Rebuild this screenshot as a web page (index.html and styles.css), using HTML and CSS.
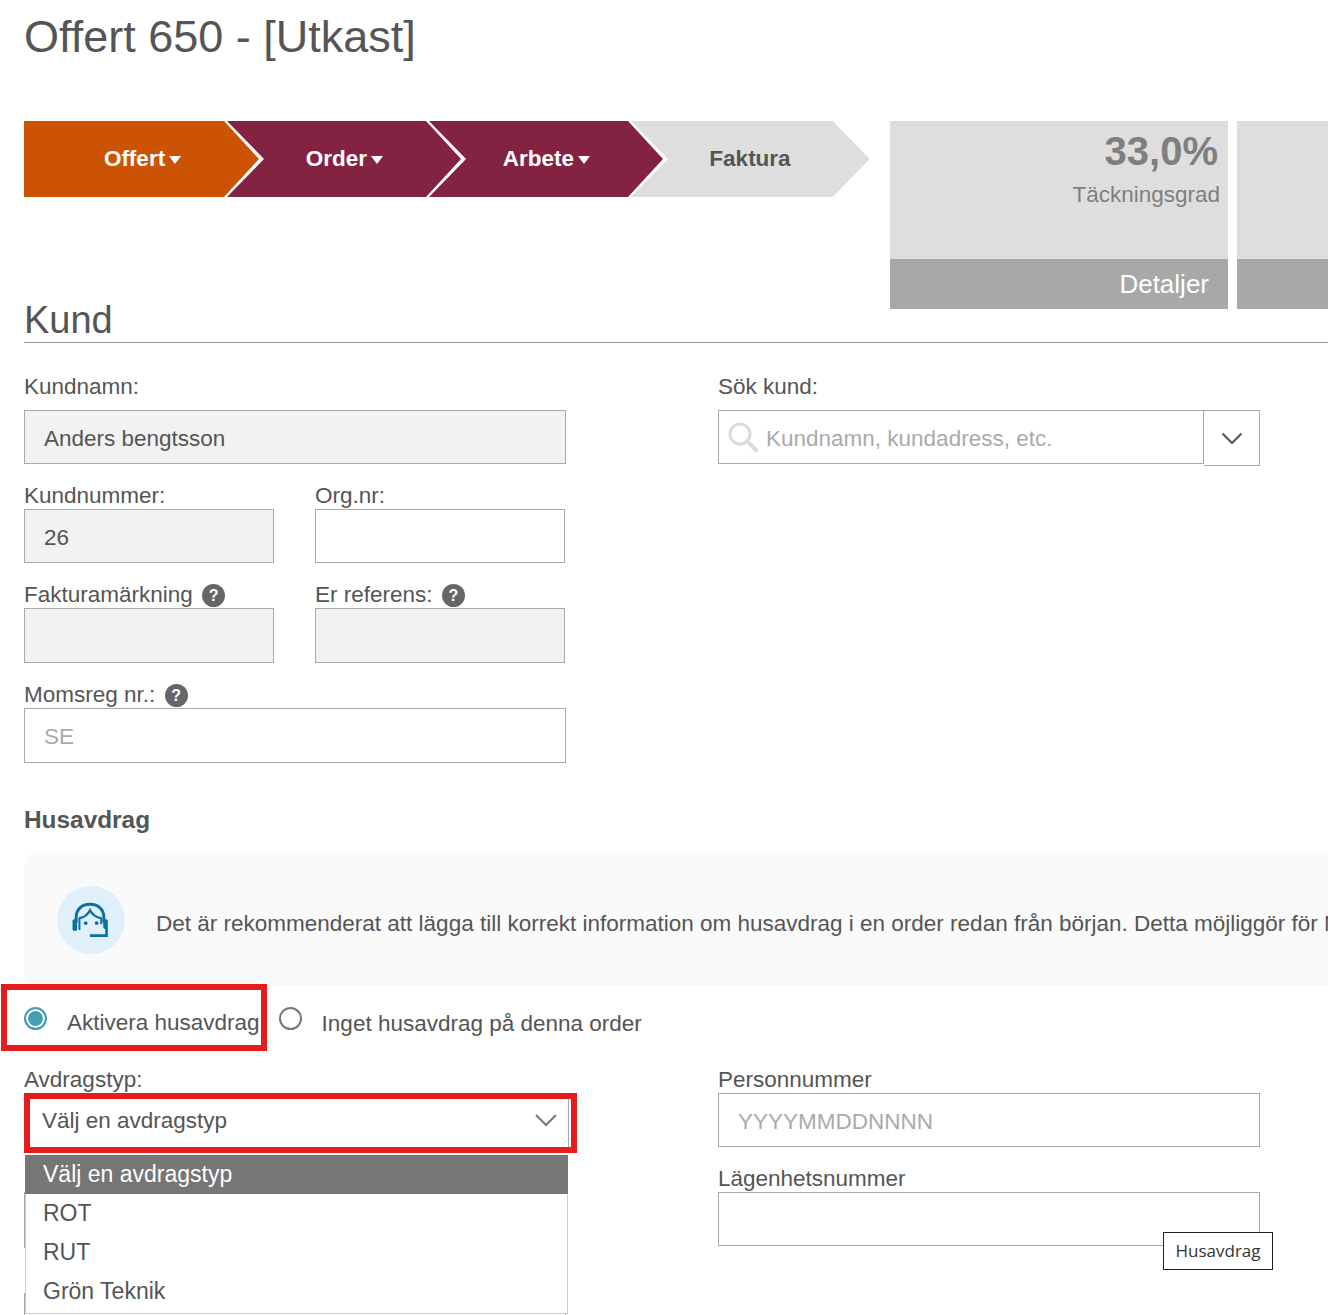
FILE: index.html
```html
<!DOCTYPE html>
<html lang="sv">
<head>
    <meta charset="UTF-8">
    <title>Offert 650</title>
    <link rel="stylesheet" href="styles.css">
</head>
<body>
    <div class="page">
        <h1 class="title">Offert 650 - [Utkast]</h1>

        <!-- Flow steps and key figures -->
        <div class="top-row">
            <div class="steps">
                <div class="step step-1"><div class="step-fill orange"><span>Offert</span><i class="caret"></i></div></div>
                <div class="step step-2"><div class="step-fill maroon"><span>Order</span><i class="caret"></i></div></div>
                <div class="step step-3"><div class="step-fill maroon"><span>Arbete</span><i class="caret"></i></div></div>
                <div class="step step-4"><div class="step-fill grey"><span>Faktura</span></div></div>
            </div>
            <div class="cards">
                <div class="card">
                    <div class="card-body">
                        <div class="card-value">33,0%</div>
                        <div class="card-label">Täckningsgrad</div>
                    </div>
                    <div class="card-foot">Detaljer</div>
                </div>
                <div class="card card-cut">
                    <div class="card-body"></div>
                    <div class="card-foot"></div>
                </div>
            </div>
        </div>

        <h2 class="section-title">Kund</h2>

        <div class="form-cols">
            <div class="col">
                <label class="label label-first">Kundnamn:</label>
                <div class="input readonly">Anders bengtsson</div>
                <div class="pair">
                    <div class="field">
                        <label class="label">Kundnummer:</label>
                        <div class="input readonly">26</div>
                    </div>
                    <div class="field">
                        <label class="label">Org.nr:</label>
                        <div class="input"></div>
                    </div>
                </div>
                <div class="pair pair-tall">
                    <div class="field">
                        <label class="label">Fakturamärkning <span class="help">?</span></label>
                        <div class="input readonly"></div>
                    </div>
                    <div class="field">
                        <label class="label">Er referens: <span class="help">?</span></label>
                        <div class="input readonly"></div>
                    </div>
                </div>
                <div class="single">
                    <label class="label">Momsreg nr.: <span class="help">?</span></label>
                    <div class="input placeholder">SE</div>
                </div>
            </div>
            <div class="col">
                <label class="label label-first">Sök kund:</label>
                <div class="search">
                    <div class="search-box">
                        <svg class="search-icon" width="30" height="30" viewBox="0 0 30 30" fill="none" stroke="#dcdcdc">
                            <circle cx="12" cy="12" r="10" stroke-width="3"/>
                            <path d="M19 19l9 9" stroke-width="4" stroke-linecap="round"/>
                        </svg>
                        <span>Kundnamn, kundadress, etc.</span>
                    </div>
                    <div class="search-toggle">
                        <svg width="22" height="13" viewBox="0 0 22 13" fill="none" stroke="#555" stroke-width="2"><path d="M1.500 1.500L11 11l9.500-9.500"/></svg>
                    </div>
                </div>
            </div>
        </div>

        <h3 class="sub-title">Husavdrag</h3>

        <div class="notice">
            <div class="notice-icon">
                <svg width="40" height="38" viewBox="63 60 120 115" fill="none" stroke="#0b6fa4">
                    <path d="M78 125V110C78 85 95 70 120 70S162 85 162 110V125" stroke-width="9"/>
                    <path d="M88 112Q110 108 120 88Q130 108 154 112" stroke-width="7"/>
                    <path d="M88 110V148" stroke-width="6"/>
                    <path d="M154 110V130" stroke-width="6"/>
                    <rect x="67" y="115" width="14" height="36" rx="6" fill="#0b6fa4" stroke="none"/>
                    <rect x="160" y="115" width="14" height="30" rx="6" fill="#0b6fa4" stroke="none"/>
                    <path d="M170 140V165H120" stroke-width="8"/>
                    <circle cx="107" cy="127" r="5.500" fill="#0b6fa4" stroke="none"/>
                    <circle cx="140" cy="127" r="5.500" fill="#0b6fa4" stroke="none"/>
                </svg>
            </div>
            <p class="notice-text">Det är rekommenderat att lägga till korrekt information om husavdrag i en order redan från början. Detta möjliggör för M</p>
        </div>

        <div class="radios">
            <label class="radio-item"><span class="radio checked"></span><span class="radio-text">Aktivera husavdrag</span></label>
            <label class="radio-item second"><span class="radio"></span><span class="radio-text">Inget husavdrag på denna order</span></label>
        </div>

        <div class="form-cols">
            <div class="col">
                <label class="label">Avdragstyp:</label>
                <div class="select">
                    <span>Välj en avdragstyp</span>
                    <svg width="24" height="14" viewBox="0 0 24 14" fill="none" stroke="#777" stroke-width="2"><path d="M2 2l10 10L22 2"/></svg>
                </div>
                <!-- fields hidden behind the open list -->
                <div class="input behind behind-1"></div>
                <div class="input behind"></div>

                <div class="dropdown">
                    <div class="option selected">Välj en avdragstyp</div>
                    <div class="option">ROT</div>
                    <div class="option">RUT</div>
                    <div class="option">Grön Teknik</div>
                </div>
            </div>
            <div class="col">
                <label class="label">Personnummer</label>
                <div class="input placeholder">YYYYMMDDNNNN</div>
                <label class="label label-apartment">Lägenhetsnummer</label>
                <div class="input"></div>
            </div>
        </div>
    </div>

    <!-- Annotations and tooltip on top of the page -->
    <div class="marker marker-radio"></div>
    <div class="marker marker-select"></div>
    <div class="tooltip">Husavdrag</div>
</body>
</html>
```

FILE: styles.css
```css
html, body {
    margin: 0;
    padding: 0;
    width: 1328px;
    height: 1315px;
    overflow: hidden;
    background-color: #fff;
}

body {
    position: relative;
    font-family: "Liberation Sans", Arial, sans-serif;
    color: #555;
}

.page {
    padding-left: 24px;
    height: 1315px;
    box-sizing: border-box;
    overflow: hidden;
}

.title {
    margin: 0;
    padding-top: 11px;
    height: 121px;
    box-sizing: border-box;
    font-size: 45px;
    line-height: 52px;
    font-weight: normal;
}

/* Steps */
.top-row {
    display: flex;
    height: 188px;
}

.steps {
    display: flex;
    flex: none;
    width: 866px;
    height: 76px;
}

.step {
    position: relative;
    flex: none;
    width: 240px;
    height: 76px;
    margin-right: -38px;
    background-color: #fff;
    clip-path: polygon(0 0, 203px 0, 240px 38px, 203px 76px, 0 76px);
}

.step-1 { z-index: 4; }
.step-2 { z-index: 3; }
.step-3 { z-index: 2; }
.step-4 { z-index: 1; }

.step-fill {
    display: flex;
    align-items: center;
    justify-content: center;
    gap: 4px;
    height: 76px;
    padding-right: 3px;
    box-sizing: border-box;
    font-size: 22.500px;
    font-weight: bold;
    color: #fff;
    clip-path: polygon(0 0, 200px 0, 235px 38px, 200px 76px, 0 76px);
}

.step-4 .step-fill {
    padding-right: 0;
    clip-path: polygon(0 0, 203px 0, 240px 38px, 203px 76px, 0 76px);
}

.orange { background-color: #cc5204; }
.maroon { background-color: #842241; }
.grey { background-color: #dedede; color: #555; }

.caret {
    width: 0;
    height: 0;
    border-left: 6px solid transparent;
    border-right: 6px solid transparent;
    border-top: 8px solid #fff;
    margin-top: 2px;
}

/* Cards */
.cards {
    display: flex;
    gap: 9px;
    flex: none;
}

.card {
    flex: none;
    width: 338px;
    height: 188px;
    display: flex;
    flex-direction: column;
    background-color: #dedede;
}

.card-cut {
    width: 91px;
}

.card-body {
    flex: 1;
    text-align: right;
    padding: 6px 8px 0 0;
}

.card-value {
    font-size: 40px;
    line-height: 48px;
    font-weight: bold;
    color: #7f7f7f;
    padding-right: 2px;
}

.card-label {
    margin-top: 4px;
    font-size: 22.500px;
    line-height: 32px;
    color: #7f7f7f;
}

.card-foot {
    height: 50px;
    line-height: 50px;
    padding-right: 19px;
    text-align: right;
    font-size: 26px;
    color: #fff;
    background-color: #a8a8a8;
}

/* Section heading */
.section-title {
    position: relative;
    margin: -11px 0 0;
    height: 44px;
    border-bottom: 1px solid #999;
    font-size: 38px;
    line-height: 44px;
    font-weight: normal;
}

/* Form */
.form-cols {
    display: flex;
    gap: 152px;
}

.col {
    position: relative;
    width: 542px;
    flex: none;
}

.label {
    display: block;
    height: 26px;
    margin-bottom: 1px;
    font-size: 22.500px;
    line-height: 28px;
}

.label-first {
    margin-top: 30px;
    margin-bottom: 11px;
}

.input {
    box-sizing: border-box;
    height: 54px;
    border: 1px solid #aaa;
    padding-left: 19px;
    font-size: 22.500px;
    line-height: 56px;
    background-color: #fff;
}

.readonly {
    background-color: #f2f2f2;
}

.placeholder {
    color: #aaa;
}

.pair {
    display: flex;
    gap: 41px;
    margin-top: 18px;
}

.field {
    width: 250px;
}

.pair-tall .input,
.single .input {
    height: 55px;
}

.single {
    margin-top: 18px;
}

.help {
    display: inline-block;
    width: 23px;
    height: 23px;
    margin-left: 3px;
    border-radius: 50%;
    background-color: #666;
    color: #fff;
    font-size: 16px;
    font-weight: bold;
    line-height: 23px;
    text-align: center;
    vertical-align: 1px;
}

/* Customer search */
.search {
    display: flex;
    align-items: flex-start;
}

.search-box {
    box-sizing: border-box;
    flex: none;
    display: flex;
    align-items: center;
    gap: 8px;
    width: 486px;
    height: 54px;
    padding-left: 9px;
    border: 1px solid #aaa;
    font-size: 22.500px;
    color: #aaa;
}

.search-box span {
    margin-top: 4px;
}

.search-toggle {
    box-sizing: border-box;
    flex: none;
    display: flex;
    align-items: center;
    justify-content: center;
    width: 56px;
    height: 56px;
    border: 1px solid #aaa;
    border-left: none;
}

/* Husavdrag */
.sub-title {
    margin: 43px 0 0;
    height: 46px;
    font-size: 24.400px;
    line-height: 28px;
    font-weight: bold;
}

.notice {
    display: flex;
    align-items: center;
    gap: 31px;
    height: 134px;
    padding-left: 33px;
    background-color: #fafafa;
    border-radius: 14px 0 0 14px;
    overflow: hidden;
    white-space: nowrap;
}

.notice-icon {
    flex: none;
    display: flex;
    align-items: center;
    justify-content: center;
    width: 68px;
    height: 68px;
    margin-top: 1px;
    border-radius: 50%;
    background-color: #dff0fb;
}

.notice-text {
    margin: 10px 0 0 0;
    font-size: 22.500px;
}

.radios {
    display: flex;
    height: 80px;
    padding-top: 20px;
    box-sizing: border-box;
}

.radio-item {
    display: flex;
    font-size: 22.500px;
    line-height: 34px;
}

.radio-item.second {
    margin-left: 19px;
}

.radio-item.second .radio-text {
    margin-top: 1px;
}

.radio {
    box-sizing: border-box;
    flex: none;
    width: 23px;
    height: 23px;
    margin-right: 20px;
    margin-top: 1px;
    border: 2px solid #777;
    border-radius: 50%;
}

.radio.checked {
    border-color: #459eb1;
    background-color: #459eb1;
    box-shadow: inset 0 0 0 2px #fff;
}

/* Deduction type select */
.select {
    box-sizing: border-box;
    display: flex;
    align-items: center;
    justify-content: space-between;
    height: 54px;
    width: 545px;
    padding: 0 10px 0 18px;
    border-right: 1px solid #aaa;
    font-size: 22.500px;
}

.select span {
    margin-top: 2px;
}

.behind {
    margin-top: 45px;
}

.behind-1 {
    height: 56px;
}

.dropdown {
    position: absolute;
    left: 1px;
    top: 89px;
    box-sizing: border-box;
    width: 543px;
    height: 159px;
    background-color: #fff;
    border: 1px solid #ccc;
    border-top: none;
}

.option {
    height: 39px;
    padding-left: 17px;
    font-size: 23px;
    line-height: 38px;
}

.option.selected {
    margin: 0 -1px;
    padding-left: 18px;
    background-color: #767676;
    color: #fff;
}

.label-apartment {
    margin-top: 18px;
}

/* Annotations */
.marker {
    position: absolute;
    box-sizing: border-box;
    border: 6px solid #e81c1c;
}

.marker-radio {
    left: 1px;
    top: 984px;
    width: 266px;
    height: 67px;
}

.marker-select {
    left: 24px;
    top: 1093px;
    width: 553px;
    height: 60px;
}

.tooltip {
    position: absolute;
    left: 1163px;
    top: 1232px;
    box-sizing: border-box;
    width: 110px;
    height: 38px;
    border: 1px solid #222;
    background-color: #fff;
    font-family: "Open Sans", sans-serif;
    font-size: 17px;
    line-height: 36px;
    text-align: center;
    color: #333;
}
```
